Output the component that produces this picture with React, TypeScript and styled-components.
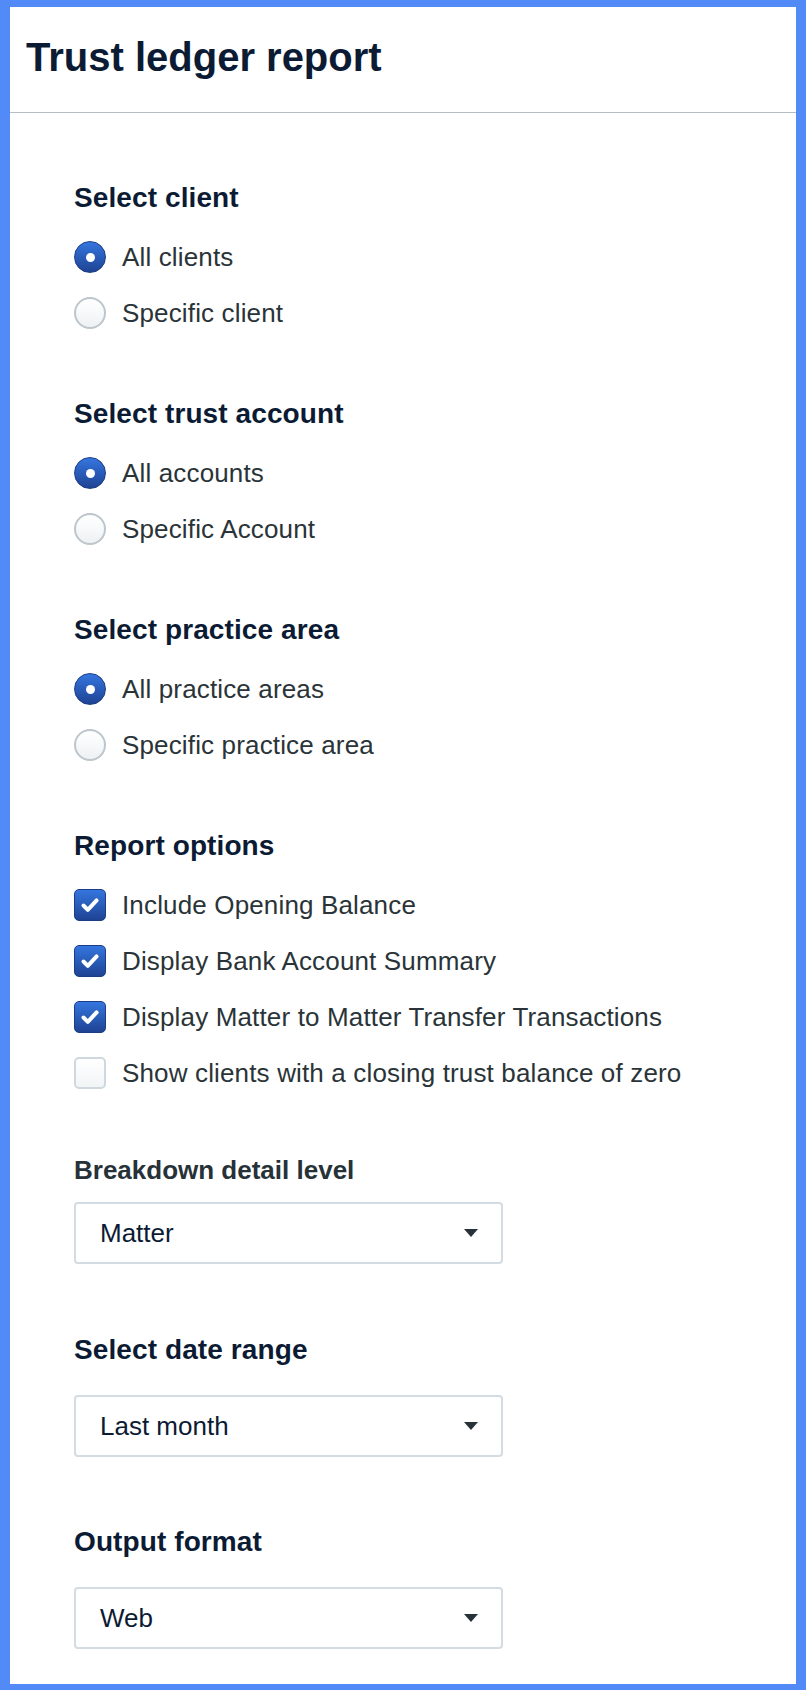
import styled, { createGlobalStyle } from "styled-components";

const GlobalStyle = createGlobalStyle`
    body {
        margin: 0;
        background: #ffffff;
        font-family: "Liberation Sans", Arial, Helvetica, sans-serif;
    }
`

interface ChoiceItem {
    label: string;
    checked: boolean;
}

const clientOptions: ChoiceItem[] = [
    { label: "All clients", checked: true },
    { label: "Specific client", checked: false },
];

const accountOptions: ChoiceItem[] = [
    { label: "All accounts", checked: true },
    { label: "Specific Account", checked: false },
];

const areaOptions: ChoiceItem[] = [
    { label: "All practice areas", checked: true },
    { label: "Specific practice area", checked: false },
];

const reportOptions: ChoiceItem[] = [
    { label: "Include Opening Balance", checked: true },
    { label: "Display Bank Account Summary", checked: true },
    { label: "Display Matter to Matter Transfer Transactions", checked: true },
    { label: "Show clients with a closing trust balance of zero", checked: false },
];

function RadioGroup({ options }: { options: ChoiceItem[] }) {
    return (
        <OptionList>
            {options.map((option) => (
                <Option key={option.label}>
                    <Radio $checked={option.checked} />
                    <span>{option.label}</span>
                </Option>
            ))}
        </OptionList>
    );
}

function CheckGroup({ options }: { options: ChoiceItem[] }) {
    return (
        <OptionList>
            {options.map((option) => (
                <Option key={option.label}>
                    <Checkbox $checked={option.checked}>
                        {option.checked && (
                            <svg width="32" height="32" viewBox="0 0 32 32">
                                <path d="M9.5 16.5 L13.8 20.8 L22.6 11.4" fill="none" stroke="#ffffff" strokeWidth="4" strokeLinecap="round" strokeLinejoin="round" />
                            </svg>
                        )}
                    </Checkbox>
                    <span>{option.label}</span>
                </Option>
            ))}
        </OptionList>
    );
}

function Dropdown({ value }: { value: string }) {
    return (
        <SelectBox>
            <span>{value}</span>
            <Caret />
        </SelectBox>
    );
}

export default function App() {
    return (
        <>
            <GlobalStyle />
            <Frame>
                <Header>
                    <Title>Trust ledger report</Title>
                </Header>

                <Body>
                    <Section $gap={0}>
                        <Heading>Select client</Heading>
                        <RadioGroup options={clientOptions} />
                    </Section>

                    <Section $gap={69}>
                        <Heading>Select trust account</Heading>
                        <RadioGroup options={accountOptions} />
                    </Section>

                    <Section $gap={69}>
                        <Heading>Select practice area</Heading>
                        <RadioGroup options={areaOptions} />
                    </Section>

                    <Section $gap={69}>
                        <Heading>Report options</Heading>
                        <CheckGroup options={reportOptions} />
                    </Section>

                    <Section $gap={65}>
                        <FieldLabel>Breakdown detail level</FieldLabel>
                        <Dropdown value="Matter" />
                    </Section>

                    <Section $gap={70}>
                        <Heading $below={29}>Select date range</Heading>
                        <Dropdown value="Last month" />
                    </Section>

                    <Section $gap={69}>
                        <Heading $below={29}>Output format</Heading>
                        <Dropdown value="Web" />
                    </Section>
                </Body>
            </Frame>
        </>
    );
}

const Frame = styled.div`
    box-sizing: border-box;
    width: 806px;
    height: 1690px;
    border-style: solid;
    border-color: #528af7;
    border-width: 7px 10px 6px 10px;
    background: #ffffff;
    overflow: hidden;
`
const Header = styled.header`
    padding: 26px 16px 31px;
    border-bottom: 1px solid #b3bec6;
`
const Title = styled.h1`
    margin: 0;
    font-size: 40px;
    line-height: 48px;
    font-weight: 700;
    color: #0c1b34;
`
const Body = styled.main`
    padding: 69px 64px 0;
    display: flex;
    flex-direction: column;
`
const Section = styled.section<{ $gap: number }>`
    display: flex;
    flex-direction: column;
    margin-top: ${(p) => p.$gap}px;
`
const Heading = styled.h2<{ $below?: number }>`
    margin: 0 0 ${(p) => p.$below ?? 0}px;
    font-size: 28px;
    line-height: 32px;
    font-weight: 700;
    letter-spacing: 0.1px;
    color: #0c1b34;
`
const FieldLabel = styled.label`
    display: block;
    margin-bottom: 16px;
    font-size: 26px;
    line-height: 32px;
    font-weight: 700;
    color: #263238;
`
const OptionList = styled.div`
    display: flex;
    flex-direction: column;
    gap: 24px;
    margin-top: 27px;
`
const Option = styled.label`
    display: flex;
    align-items: center;
    gap: 16px;
    font-size: 26px;
    line-height: 32px;
    letter-spacing: 0.15px;
    color: #2a3438;
`
const Radio = styled.span<{ $checked: boolean }>`
    box-sizing: border-box;
    flex: none;
    width: 32px;
    height: 32px;
    border-radius: 50%;
    display: flex;
    align-items: center;
    justify-content: center;
    ${(p) => p.$checked
        ? `
        background: linear-gradient(#3576df, #1e4393);
        border: 1px solid #1c3d85;
        &::after {
            content: "";
            width: 9px;
            height: 9px;
            border-radius: 50%;
            background: #ffffff;
        }`
        : `
        background: linear-gradient(#ffffff, #eef1f4);
        border: 2px solid #bcc6cc;
        `}
`
const Checkbox = styled.span<{ $checked: boolean }>`
    box-sizing: border-box;
    flex: none;
    width: 32px;
    height: 32px;
    border-radius: 5px;
    display: flex;
    align-items: center;
    justify-content: center;
    overflow: hidden;
    ${(p) => p.$checked
        ? `
        background: linear-gradient(#3576df, #1e4393);
        border: 1px solid #1c3d85;`
        : `
        background: linear-gradient(#ffffff, #f1f4f6);
        border: 2px solid #cfd8de;`}
    svg {
        flex: none;
    }
`
const SelectBox = styled.div`
    box-sizing: border-box;
    width: 429px;
    height: 62px;
    border: 2px solid #d3dce2;
    border-radius: 4px;
    padding: 0 23px 0 24px;
    display: flex;
    align-items: center;
    justify-content: space-between;
    font-size: 26px;
    line-height: 32px;
    color: #0c1b34;
`
const Caret = styled.span`
    width: 0;
    height: 0;
    border-left: 7.5px solid transparent;
    border-right: 7.5px solid transparent;
    border-top: 8px solid #263238;
`
